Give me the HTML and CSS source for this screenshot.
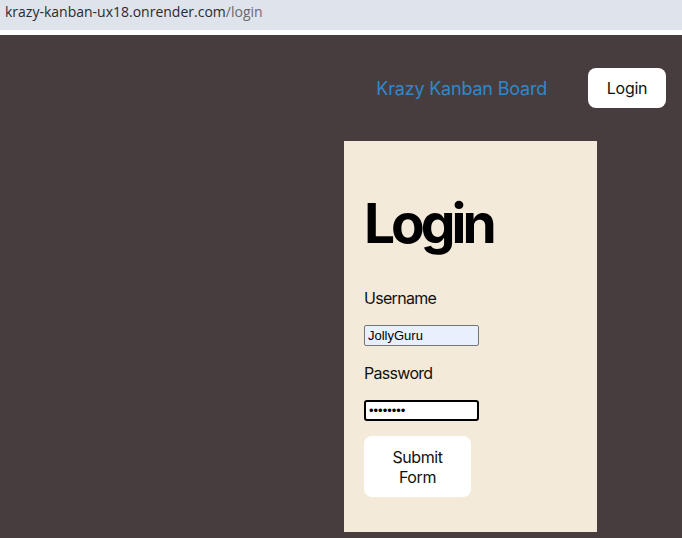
FILE: index.html
```html
<!DOCTYPE html>
<html lang="en">
<head>
<meta charset="utf-8">
<title>Login</title>
<link rel="stylesheet" href="styles.css">
</head>
<body>
<div class="urlbar"><span class="host">krazy-kanban-ux18.onrender.com</span><span class="path">/login</span></div>
<div class="strip"></div>
<div class="page">
  <header class="nav">
    <span class="brand">Krazy Kanban Board</span>
    <button class="nav-btn" type="button">Login</button>
  </header>
  <main class="card">
    <h1 class="title">Login</h1>
    <form class="form">
      <label class="label" for="u">Username</label>
      <input class="field field-auto" id="u" type="text" value="JollyGuru">
      <label class="label" for="p">Password</label>
      <input class="field field-focus" id="p" type="password" value="password">
      <button class="submit" type="button">Submit Form</button>
    </form>
  </main>
</div>
</body>
</html>
```
FILE: styles.css
```css
html, body {
  margin: 0;
  padding: 0;
  height: 100%;
}
body {
  display: flex;
  flex-direction: column;
  font-family: Inter, "Noto Sans", sans-serif;
  background: #473d3e;
}
.urlbar {
  height: 30px;
  background: #dfe3eb;
  font-family: "Open Sans", "Noto Sans", sans-serif;
  font-size: 14px;
  line-height: 24px;
  padding-left: 5px;
  box-sizing: border-box;
}
.host { color: #2b2b2b; }
.path { color: #6a6a6a; }
.strip {
  height: 5px;
  background: #ffffff;
}
.page {
  flex: 1;
  background: #473d3e;
  display: flex;
  flex-direction: column;
}
.nav {
  display: flex;
  justify-content: flex-end;
  align-items: center;
  gap: 41px;
  padding: 33px 16px 0 0;
  height: 40px;
}
.brand {
  color: #2d88cc;
  font-size: 18px;
  letter-spacing: -0.2px;
}
.nav-btn {
  width: 78px;
  height: 40px;
  border: none;
  border-radius: 8px;
  background: #ffffff;
  color: #111;
  font-family: Inter, sans-serif;
  font-size: 16px;
  letter-spacing: -0.3px;
  padding: 0;
}
.card {
  margin: 33px 0 0 344px;
  width: 253px;
  height: 391px;
  background: #f4eada;
  box-sizing: border-box;
  padding: 48px 20px 0 20px;
}
.title {
  margin: 0;
  font-size: 55px;
  font-weight: 700;
  line-height: 68px;
  color: #000;
  letter-spacing: -4px;
}
.form {
  display: flex;
  flex-direction: column;
  align-items: flex-start;
  margin-top: 32px;
}
.label {
  font-size: 16px;
  line-height: 19px;
  color: #111;
  letter-spacing: -0.7px;
  margin-bottom: 17px;
}
.field {
  width: 115px;
  height: 21px;
  box-sizing: border-box;
  font-family: Arial, "Liberation Sans", sans-serif;
  font-size: 13px;
  padding: 1px 3px;
  margin: 0 0 18px 0;
  border-radius: 2px;
}
.field-auto {
  background: #e8f0fe;
  border: 1px solid #767676;
  color: #000;
}
.field-focus {
  background: #ffffff;
  border: 2px solid #000;
  border-radius: 3px;
  margin-bottom: 15px;
}
.submit {
  width: 107px;
  height: 61px;
  border: none;
  border-radius: 8px;
  background: #ffffff;
  font-family: Inter, sans-serif;
  font-size: 16px;
  line-height: 20px;
  letter-spacing: -0.4px;
  color: #111;
  padding: 0 28px;
}
```
